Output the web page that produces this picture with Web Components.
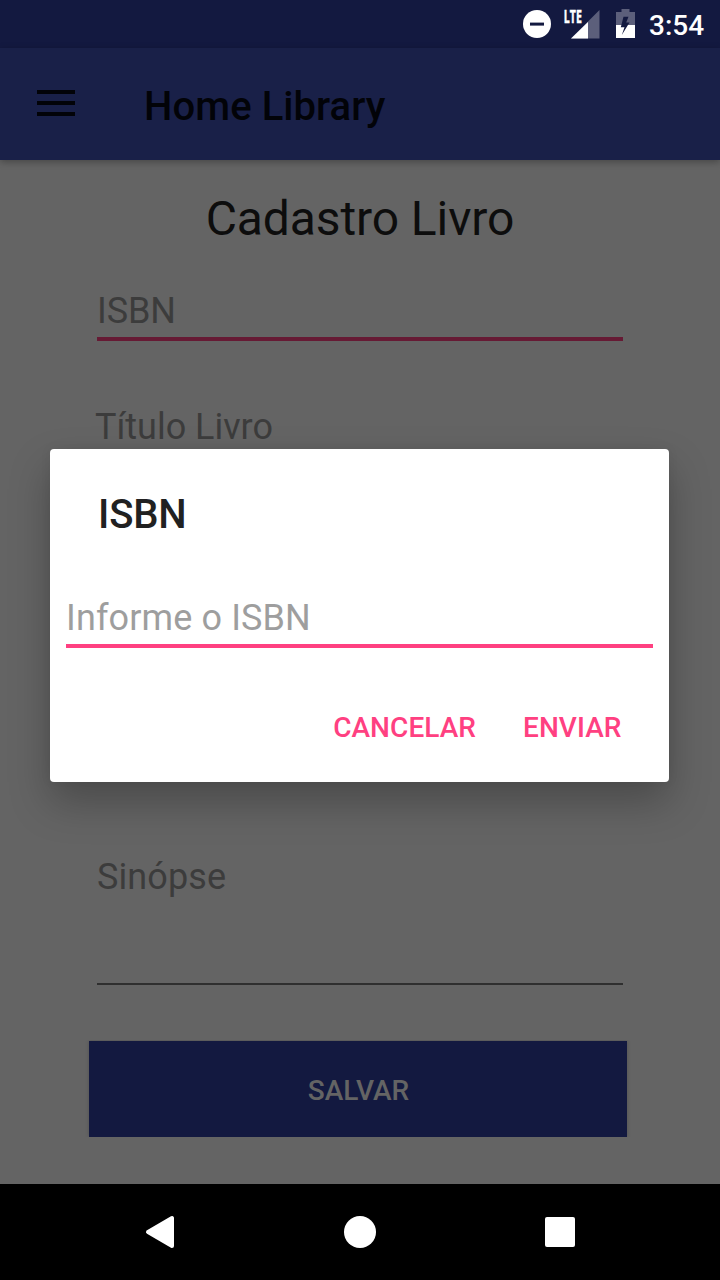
<!DOCTYPE html>
<html lang="pt-BR">
<head>
<meta charset="utf-8">
<title>Home Library</title>
<style>
html, body { margin: 0; height: 100%; overflow: hidden; background: #000; font-family: Roboto, sans-serif; }
</style>
</head>
<body>
<library-app></library-app>
<script>
const define = (name, markup) => customElements.define(name, class extends HTMLElement {
  constructor() {
    super();
    const t = document.createElement('template');
    t.innerHTML = markup;
    this.attachShadow({ mode: 'open' }).append(t.content.cloneNode(true));
  }
});

define('status-bar', `
<style>
:host { display: flex; height: 48px; box-sizing: border-box; padding-right: 16px; justify-content: flex-end; align-items: center; background: #131940; color: #fff; }
svg { display: block; flex: none; }
time { width: 55px; margin-left: 14px; font: 500 28px/48px Roboto, sans-serif; padding-top: 3px; white-space: nowrap; }
text { font-family: "Open Sans", Roboto, sans-serif; font-weight: 700; }
</style>
<svg width="112" height="48" viewBox="523 0 112 48">
  <circle cx="537" cy="24" r="14" fill="#fff"/>
  <rect x="530" y="22.6" width="14" height="3" fill="#131940"/>
  <path d="M599.500 10V38.500H571Z" fill="#5c5f7b"/>
  <path d="M588 22V38.500H571Z" fill="#fff"/>
  <text x="563.8" y="22.6" font-size="17.5" textLength="18" lengthAdjust="spacingAndGlyphs" fill="#fff" stroke="#fff" stroke-width=".5">LTE</text>
  <path d="M621.5 9h8v3h5.5v13h-19V12h5.500Z" fill="#5c5f7b"/>
  <path d="M616 25h19v13h-19Z" fill="#fff"/>
  <path d="M623.500 16.800H628.500L626.200 22.500H629.500L621.800 35L624.500 27.200H620.800Z" fill="#131940"/>
</svg>
<time>3:54</time>`);

define('app-bar', `
<style>
:host { display: flex; height: 112px; align-items: center; background: #192048; box-shadow: 0 2px 7px rgba(0,0,0,.3); position: relative; }
svg { display: block; margin: 0 69px 2px 37px; }
h1 { margin: 6px 0 0; font: 500 40px/48px Roboto, sans-serif; letter-spacing: .07px; color: #020308; white-space: nowrap; }
</style>
<svg width="38" height="28"><path d="M0 3H38M0 14H38M0 25H38" stroke="#020308" stroke-width="4"/></svg>
<h1><slot></slot></h1>`);

define('text-field', `
<style>
:host { display: flex; flex-direction: column; justify-content: space-between; height: 51px; border-bottom: 0 solid #661a34; box-sizing: border-box; font: 36px/42px Roboto, sans-serif; color: #3c3c3c; }
:host([focused]) { border-bottom-width: 4px; letter-spacing: -.1px; }
:host([multiline]) { height: 129px; border-bottom: 2px solid #2f2f2f; letter-spacing: .1px; }
:host([dialog]) { border-bottom-color: #ff4081; color: #9e9e9e; letter-spacing: .12px; }
</style>
<span><slot></slot></span>`);

define('raised-button', `
<style>
:host { display: block; }
button { display: block; width: 100%; height: 96px; border: 0; padding: 3px 0 0 1px; background: #131940; color: #646464; font: 500 28px/32px Roboto, sans-serif; box-shadow: 0 0 4px rgba(0,0,0,.2); clip-path: inset(-1px -6px 0 -6px); }
</style>
<button><slot></slot></button>`);

define('flat-button', `
<style>
:host { display: block; }
button { display: block; border: 0; padding: 0; background: none; color: #ff4081; font: 500 28px/34px Roboto, sans-serif; letter-spacing: .06px; white-space: nowrap; }
</style>
<button><slot></slot></button>`);

define('book-form', `
<style>
:host { display: flex; flex-direction: column; flex: 1; padding: 31px 93px 0 97px; background: #646464; }
h2 { margin: 0 4px 0 0; padding-bottom: 43px; text-align: center; font: 400 48px/56px Roboto, sans-serif; letter-spacing: -.1px; color: #0d0d0d; }
text-field { margin-right: 4px; }
.title { margin: 65px 4px 399px -2px; letter-spacing: -.02px; }
raised-button { margin: 56px 0 0 -8px; }
</style>
<h2>Cadastro Livro</h2>
<text-field focused>ISBN</text-field>
<text-field class="title">Título Livro</text-field>
<text-field multiline>Sinópse</text-field>
<raised-button>SALVAR</raised-button>`);

define('isbn-dialog', `
<style>
:host { display: flex; flex-direction: column; box-sizing: border-box; height: 333px; padding: 42px 16px 0; background: #fff; border-radius: 4px; box-shadow: 0 20px 40px rgba(0,0,0,.26), 0 0 12px rgba(0,0,0,.06); }
h3 { margin: 0 0 58px 32px; font: 500 40px/48px Roboto, sans-serif; letter-spacing: -.15px; color: #212121; }
text-field { margin-bottom: 63px; }
.actions { display: flex; justify-content: flex-end; gap: 47px; padding-right: 31.500px; }
</style>
<h3>ISBN</h3>
<text-field dialog focused>Informe o ISBN</text-field>
<div class="actions"><flat-button>CANCELAR</flat-button><flat-button>ENVIAR</flat-button></div>`);

define('navigation-bar', `
<style>
:host { display: flex; height: 96px; justify-content: center; align-items: center; gap: 160px; background: #000; }
svg { display: block; }
</style>
<svg width="40" height="40"><path d="M8 20L32 6V34Z" fill="#fff" stroke="#fff" stroke-width="4" stroke-linejoin="round"/></svg>
<svg width="40" height="40"><circle cx="20" cy="20" r="16" fill="#fff"/></svg>
<svg width="40" height="40"><rect x="5" y="5" width="30" height="30" rx="2" fill="#fff"/></svg>`);

define('library-app', `
<style>
:host { display: flex; flex-direction: column; width: 720px; height: 1280px; position: relative; }
isbn-dialog { position: absolute; left: 50px; top: 449px; width: 619px; }
</style>
<status-bar></status-bar>
<app-bar>Home Library</app-bar>
<book-form></book-form>
<navigation-bar></navigation-bar>
<isbn-dialog></isbn-dialog>`);
</script>
</body>
</html>
